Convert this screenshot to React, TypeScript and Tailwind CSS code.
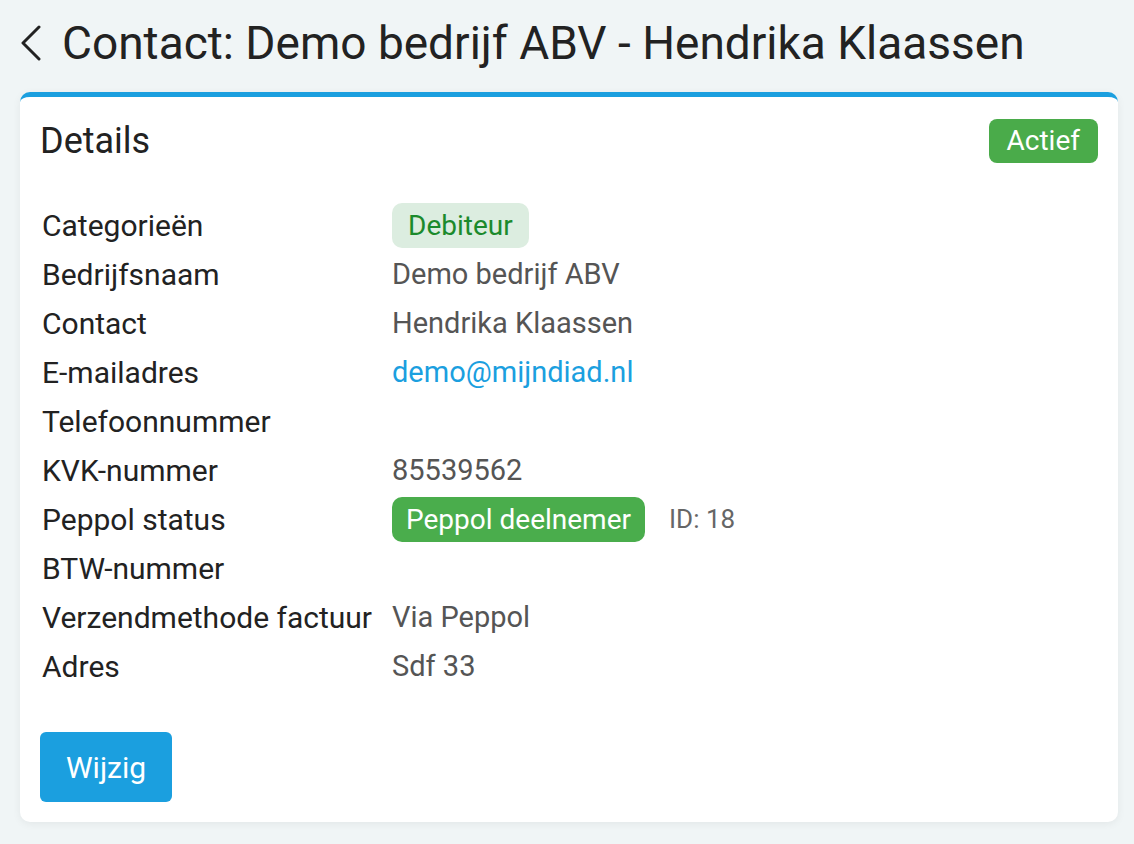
import React from 'react';

const rows: Array<{ label: string; value?: React.ReactNode }> = [
  {
    label: 'Categorieën',
    value: (
      <span className="inline-flex h-[45px] items-center rounded-[10px] bg-[#dcede0] px-[16px] text-[28px] text-[#1b8a2c]">
        Debiteur
      </span>
    ),
  },
  { label: 'Bedrijfsnaam', value: 'Demo bedrijf ABV' },
  { label: 'Contact', value: 'Hendrika Klaassen' },
  { label: 'E-mailadres', value: <span className="text-[#1b9fdf]">demo@mijndiad.nl</span> },
  { label: 'Telefoonnummer' },
  { label: 'KVK-nummer', value: '85539562' },
  {
    label: 'Peppol status',
    value: (
      <span className="flex items-center gap-[24px]">
        <span className="inline-flex h-[45px] items-center rounded-[10px] bg-[#4aad4c] px-[14px] text-[28px] text-white">
          Peppol deelnemer
        </span>
        <span className="text-[26px] text-[#666]">ID: 18</span>
      </span>
    ),
  },
  { label: 'BTW-nummer' },
  { label: 'Verzendmethode factuur', value: 'Via Peppol' },
  { label: 'Adres', value: 'Sdf 33' },
];

export default function App() {
  return (
    <div className="min-h-[844px] bg-[#f0f5f6] px-[20px] pt-[18px] font-['Roboto',sans-serif]">
      <div className="flex h-[50px] items-center gap-[20px]">
        <svg width="22" height="36" viewBox="0 0 22 36" className="text-[#222]">
          <path d="M19 2 L3 18 L19 34" fill="none" stroke="currentColor" strokeWidth="3" strokeLinecap="round" strokeLinejoin="round" />
        </svg>
        <h1 className="text-[46px] leading-none text-[#222]">Contact: Demo bedrijf ABV - Hendrika Klaassen</h1>
      </div>

      <div className="mt-[24px] w-[1098px] rounded-[10px] border-t-[5px] border-[#1b9fdf] bg-white px-[20px] pb-[20px] pt-[22px] shadow-[0_2px_8px_rgba(0,0,0,0.06)]">
        <div className="flex h-[44px] items-center justify-between">
          <h2 className="text-[36px] text-[#222]">Details</h2>
          <span className="inline-flex h-[44px] items-center rounded-[8px] bg-[#4aab4a] px-[18px] text-[28px] text-white">
            Actief
          </span>
        </div>

        <div className="mt-[38px] pl-[2px]">
          {rows.map((row) => (
            <div key={row.label} className="flex h-[49px] items-center">
              <div className="w-[350px] text-[30px] text-[#222]">{row.label}</div>
              <div className="text-[29px] text-[#555]">{row.value}</div>
            </div>
          ))}
        </div>

        <button className="mt-[41px] h-[70px] rounded-[6px] bg-[#1b9fdf] px-[26px] text-[30px] text-white">
          Wijzig
        </button>
      </div>
    </div>
  );
}
